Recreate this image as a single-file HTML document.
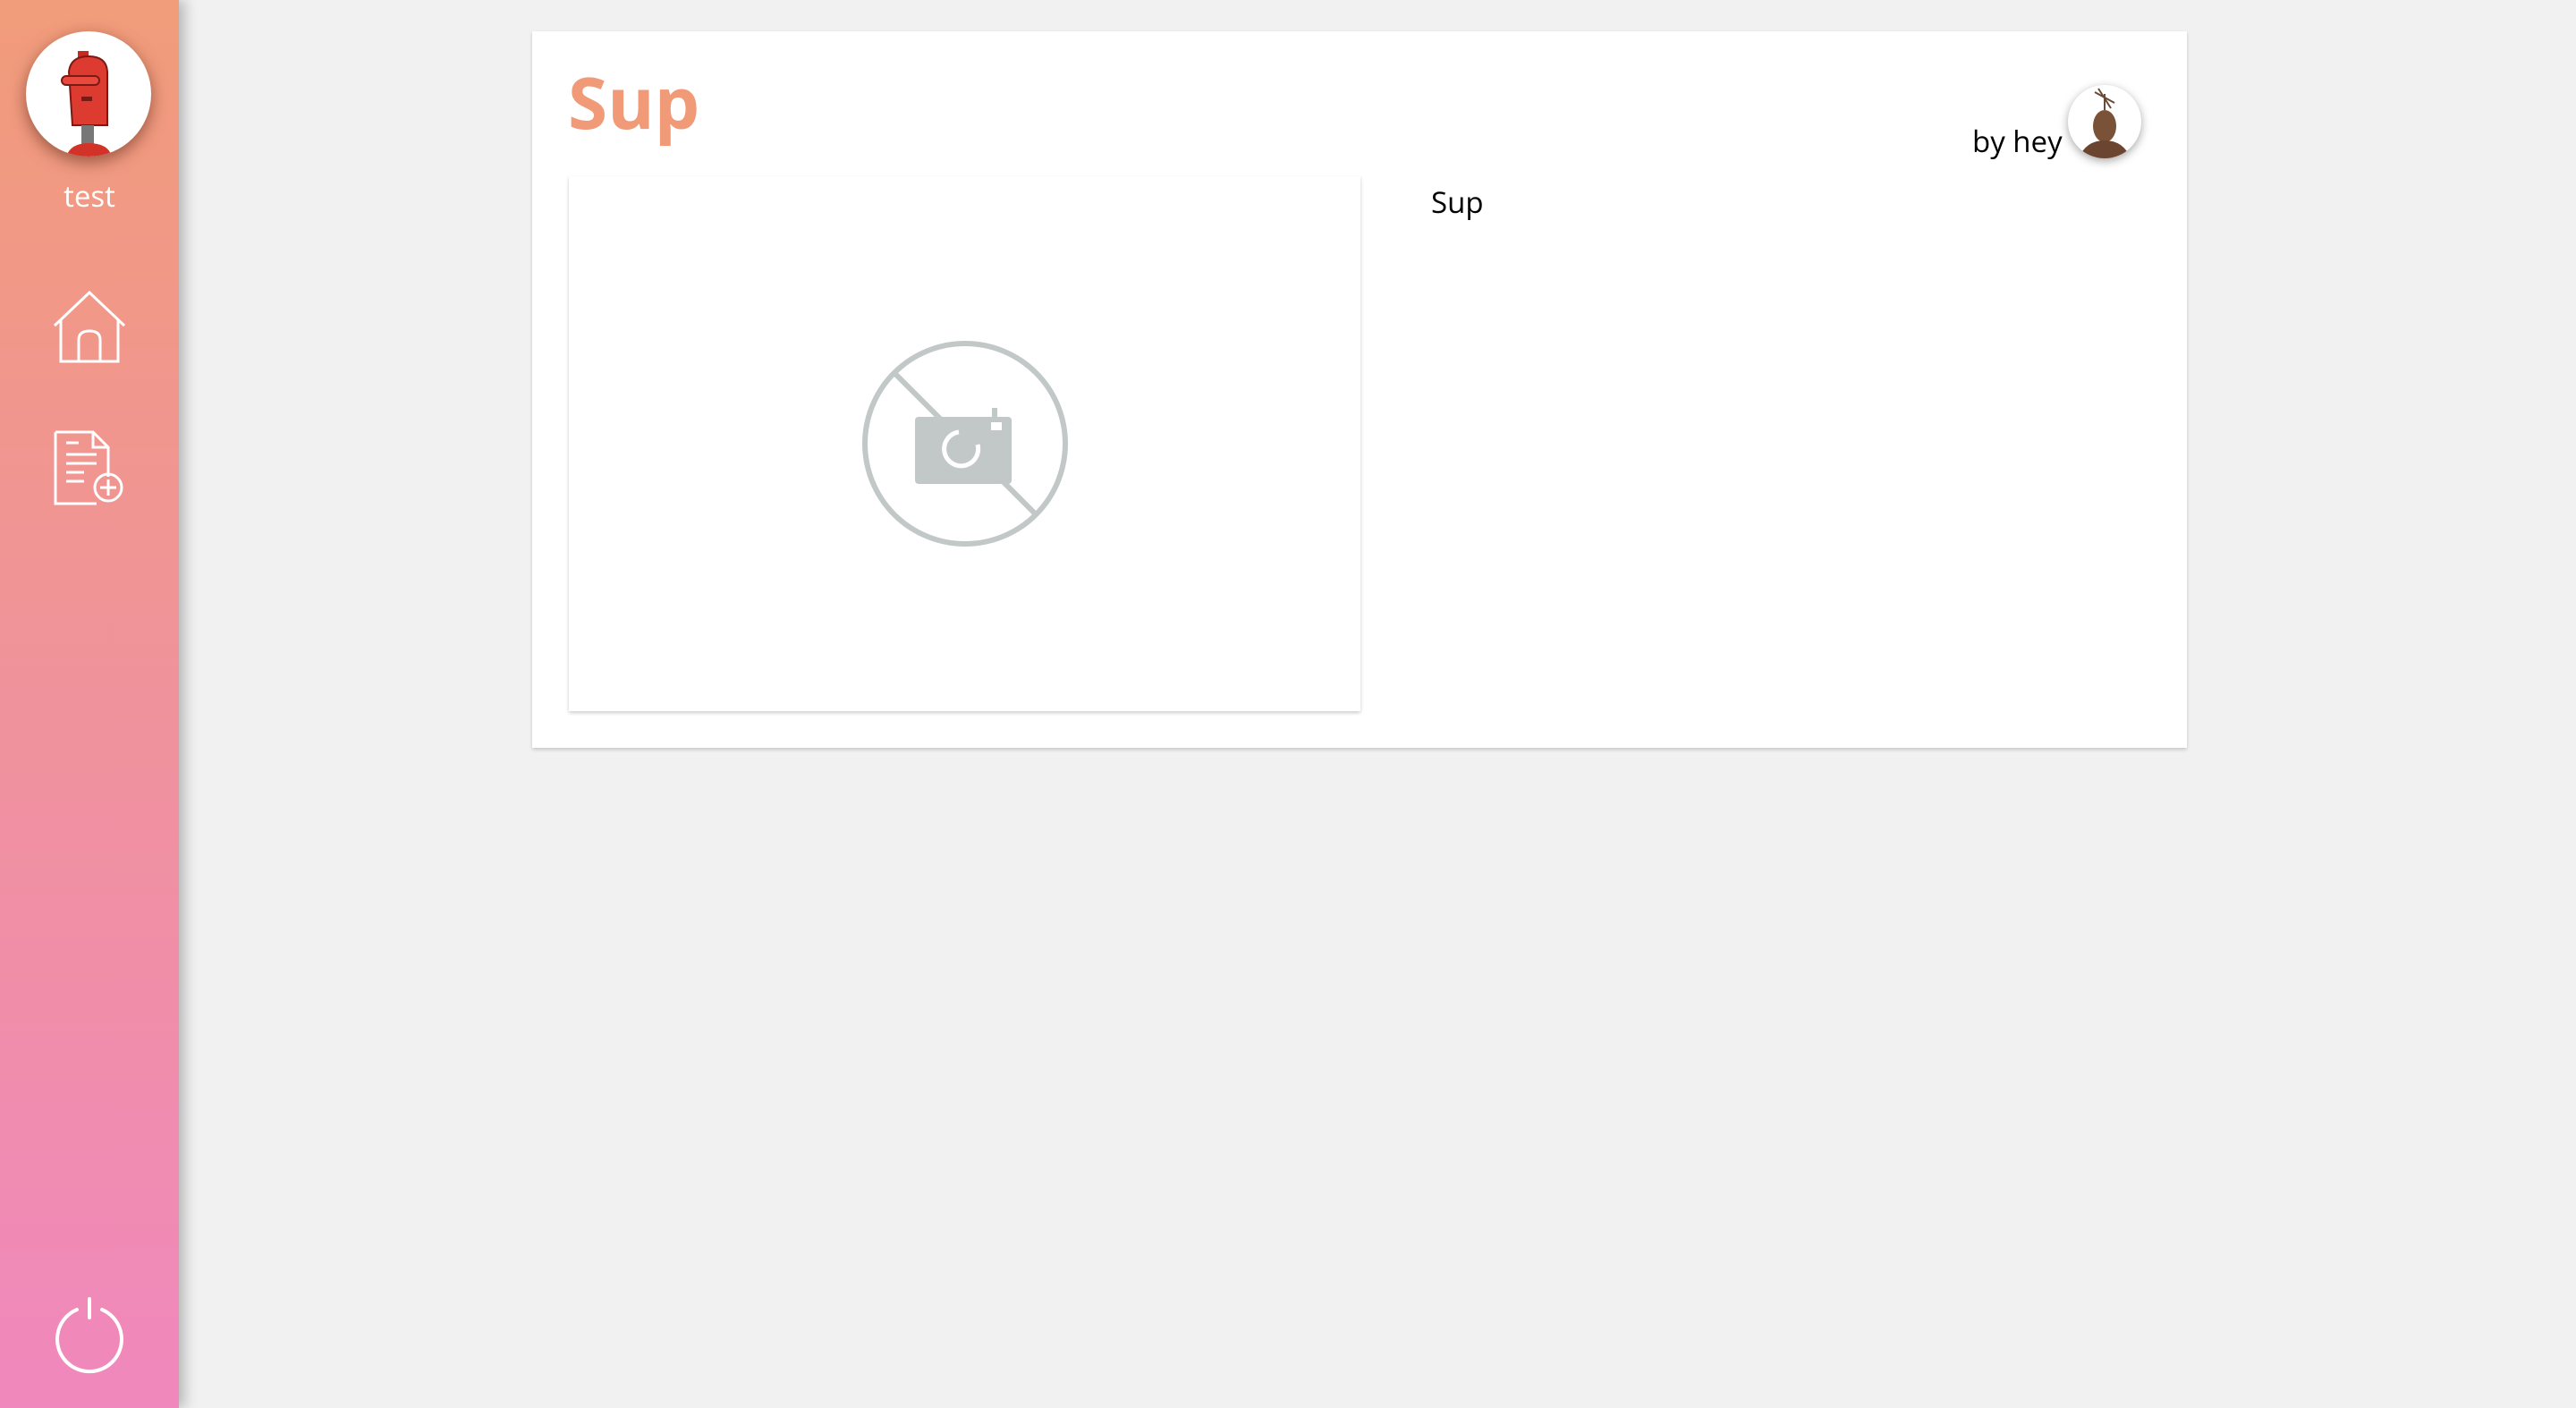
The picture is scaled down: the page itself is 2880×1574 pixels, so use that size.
<!DOCTYPE html>
<html><head><meta charset="utf-8"><style>
html,body{margin:0;padding:0;width:2880px;height:1574px;overflow:hidden;background:#f1f1f1;font-family:"Open Sans","Liberation Sans",sans-serif;}
.side{position:absolute;left:0;top:0;width:200px;height:1574px;background:linear-gradient(#f19c7a,#f088bd);box-shadow:6px 0 14px rgba(0,0,0,.25);}
.av{position:absolute;left:29px;top:35px;width:140px;height:140px;border-radius:50%;background:#fff;box-shadow:0 6px 18px rgba(80,30,10,.55);overflow:hidden;}
.test{position:absolute;left:0;width:200px;top:196px;text-align:center;color:#fff;font-size:33px;}
.card{position:absolute;left:595px;top:35px;width:1850px;height:801px;background:#fff;box-shadow:0 2px 4px rgba(0,0,0,.18);}
h1{position:absolute;left:40px;top:24px;margin:0;font-size:80px;font-weight:bold;color:#f19a78;}
.img{position:absolute;left:41px;top:162px;width:885px;height:598px;background:#fff;box-shadow:0 2px 4px rgba(0,0,0,.2);}
.txt{position:absolute;left:1005px;top:168px;font-size:33px;color:#000;}
.by{position:absolute;left:1610px;top:100px;font-size:33px;color:#000;}
.av2{position:absolute;left:1717px;top:60px;width:82px;height:82px;border-radius:50%;background:#fff;box-shadow:0 3px 10px rgba(0,0,0,.35);overflow:hidden;}
</style></head><body>
<div class="side">
 <div class="av"><svg width="140" height="140" viewBox="0 0 140 140">
  <rect x="58" y="22" width="12" height="12" fill="#c82a22"/>
  <path d="M48 45 Q50 28 70 28 Q90 28 91 45 L91 105 L52 105 Z" fill="#dd3a30" stroke="#7a1a14" stroke-width="2"/>
  <rect x="40" y="50" width="42" height="10" rx="5" fill="#e9483c" stroke="#7a1a14" stroke-width="2"/>
  <rect x="62" y="73" width="12" height="5" fill="#7a1a14"/>
  <rect x="62" y="105" width="14" height="22" fill="#777"/>
  <path d="M45 140 Q50 125 70 125 Q92 125 96 140Z" fill="#d23228"/>
 </svg></div>
 <div class="test">test</div>
 <svg style="position:absolute;left:58px;top:322px" width="84" height="84" viewBox="0 0 84 84" fill="none" stroke="#fff" stroke-width="3">
  <path d="M3 42 L42 5 L81 42 M10 36 V82 H74 V36 M30 82 V58 Q30 48 42 48 Q54 48 54 58 V82"/>
 </svg>
 <svg style="position:absolute;left:58px;top:478px" width="86" height="90" viewBox="0 0 86 90" fill="none" stroke="#fff" stroke-width="3">
  <path d="M4 5 H46 L63 22 V55 M46 5 V22 H63 M4 5 V85 H50"/>
  <path d="M16 17 H30 M16 30 H50 M16 40 H50 M16 50 H36 M16 60 H36"/>
  <circle cx="63" cy="67" r="15"/><path d="M63 58 V76 M54 67 H72"/>
 </svg>
 <svg style="position:absolute;left:58px;top:1448px" width="84" height="90" viewBox="0 0 84 90" fill="none" stroke="#fff" stroke-width="4" stroke-linecap="round">
  <path d="M28 16 A36 36 0 1 0 56 16"/><path d="M42 4 V25"/>
 </svg>
</div>
<div class="card">
 <h1>Sup</h1>
 <div class="img">
  <svg style="position:absolute;left:326px;top:182px" width="234" height="234" viewBox="0 0 234 234" fill="none">
   <circle cx="117" cy="117" r="112" stroke="#c2c7c7" stroke-width="6"/>
   <path d="M38 38 L196 196" stroke="#c2c7c7" stroke-width="6"/>
   <rect x="61" y="87" width="108" height="75" rx="4" fill="#c2c7c7"/>
   <rect x="147" y="77" width="6" height="10" fill="#c2c7c7"/>
   <rect x="146" y="93" width="12" height="9" fill="#fff"/>
   <path d="M110 104 A19 19 0 1 0 131 118" stroke="#fff" stroke-width="5"/>
  </svg>
 </div>
 <div class="txt">Sup</div>
 <div class="by">by hey</div>
 <div class="av2"><svg width="82" height="82" viewBox="0 0 82 82">
  <path d="M30 8 L52 20 M34 4 L48 26 M41 10 V28" stroke="#6b4a35" stroke-width="2"/>
  <ellipse cx="41" cy="46" rx="13" ry="18" fill="#7a5238"/>
  <path d="M12 82 Q20 62 41 62 Q62 62 70 82Z" fill="#6b4530"/>
 </svg></div>
</div>
</body></html>
